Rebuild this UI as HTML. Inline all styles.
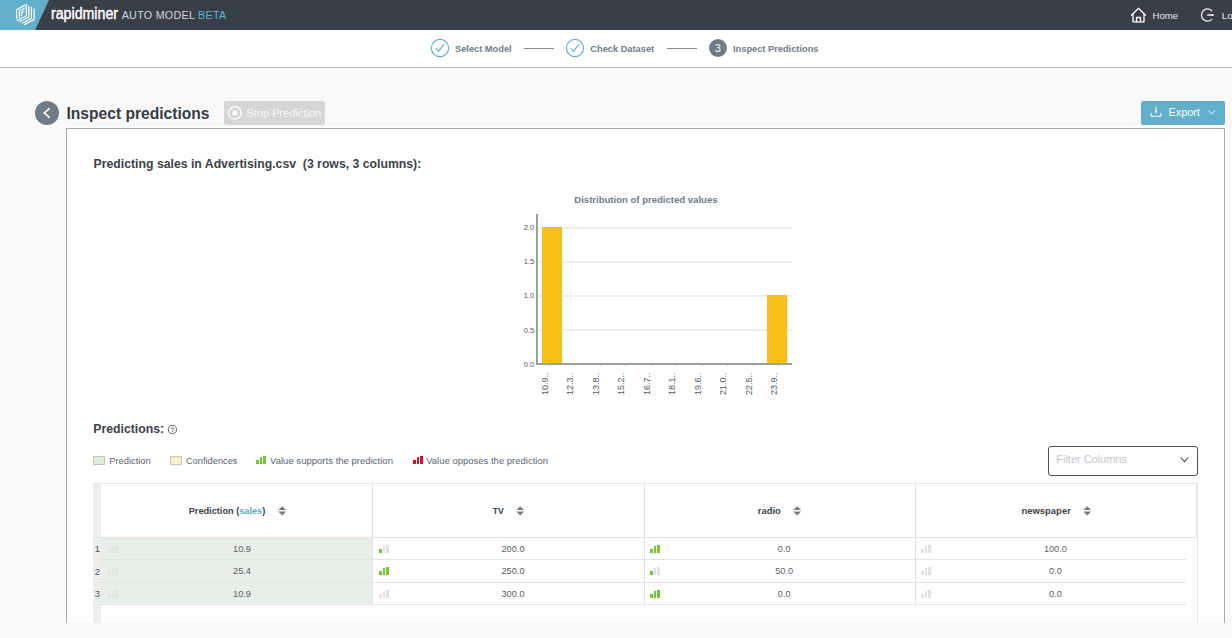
<!DOCTYPE html>
<html><head><meta charset="utf-8"><title>Inspect predictions</title>
<style>
html,body{margin:0;padding:0;width:1232px;height:638px;overflow:hidden;background:#f9f9f9;font-family:"Liberation Sans",sans-serif;}
.t{position:absolute;white-space:pre;}
.r{position:absolute;box-sizing:content-box;}
</style></head><body>
<div class="r" style="left:0px;top:0px;width:1232px;height:30px;background:#393f47;"></div>
<svg class="r" style="left:0;top:0" width="60" height="30"><polygon points="0,0 49,0 35.2,30 0,30" fill="#62afcb"/></svg>
<svg class="r" style="left:0;top:0" width="40" height="30"><g fill="none" stroke="#fff" stroke-width="1.25" stroke-linecap="round" stroke-linejoin="round">
<polyline points="25,5.1 16.6,9.9 16.6,18.5"/>
<polyline points="24.3,8.3 19.4,11.2 19.4,17.5"/>
<polyline points="24,11.2 21.7,12.6 21.7,15.5"/>
<polyline points="26.4,4.5 26.4,15.8 17.2,20.5"/>
<polyline points="28.8,6.1 28.8,17.1 19.5,21.8"/>
<polyline points="31.4,7.4 31.4,18.5 22.2,23.2"/>
<polyline points="34.1,9 34.1,19.6 24.7,24.4"/>
</g></svg>
<div class="t" style="left:50.80px;top:5.03px;font-size:16.5px;line-height:16.5px;font-weight:400;color:#fff;transform:scale(0.86,0.97);transform-origin:0 14px;-webkit-text-stroke:0.45px #fff">rapidminer</div>
<div class="t" style="left:121.70px;top:9.64px;font-size:10.7px;line-height:10.7px;font-weight:400;color:#d5d8db;letter-spacing:0.3px">AUTO MODEL <span style="color:#5cb4d6">BETA</span></div>
<svg class="r" style="left:1128px;top:5px" width="22" height="20"><g fill="none" stroke="#fff" stroke-width="1.3" stroke-linejoin="round" stroke-linecap="round">
<polyline points="3.5,10.3 10.5,3.2 17.5,10.3"/>
<polyline points="5,9 5,16.8 16,16.8 16,9"/>
<polyline points="8.5,16.8 8.5,12.5 12.5,12.5 12.5,16.8"/>
</g></svg>
<div class="t" style="left:1152.50px;top:11.07px;font-size:9.6px;line-height:9.6px;font-weight:400;color:#e9ecef;">Home</div>
<svg class="r" style="left:1198px;top:5px" width="20" height="20"><g fill="none" stroke="#eee" stroke-width="1.3" stroke-linecap="round">
<path d="M13.8,5.6 A6.1,6.1 0 1 0 13.8,14.4"/>
<line x1="9.8" y1="10" x2="14.5" y2="10" stroke-width="1.6"/>
</g><circle cx="14.6" cy="10" r="1.1" fill="#fff"/></svg>
<div class="t" style="left:1221.80px;top:10.60px;font-size:9.8px;line-height:9.8px;font-weight:400;color:#e9ecef;">Logout</div>
<div class="r" style="left:0px;top:30px;width:1232px;height:37px;background:#ffffff;"></div>
<div class="r" style="left:0px;top:67px;width:1232px;height:1px;background:#b1bac3;"></div>
<svg class="r" style="left:430px;top:38px" width="20" height="20"><circle cx="10" cy="10" r="8.6" fill="none" stroke="#5fb0cc" stroke-width="1.1"/><polyline points="5.8,10.4 8.4,13.4 13.8,6.4" fill="none" stroke="#5fb0cc" stroke-width="1.1"/></svg>
<div class="t" style="left:455.00px;top:45.15px;font-size:9.27px;line-height:9.27px;font-weight:700;color:#707d8a;">Select Model</div>
<div class="r" style="left:524px;top:48px;width:30px;height:1px;background:#7f8a94;"></div>
<svg class="r" style="left:565px;top:38px" width="20" height="20"><circle cx="10" cy="10" r="8.6" fill="none" stroke="#5fb0cc" stroke-width="1.1"/><polyline points="5.8,10.4 8.4,13.4 13.8,6.4" fill="none" stroke="#5fb0cc" stroke-width="1.1"/></svg>
<div class="t" style="left:590.30px;top:45.15px;font-size:9.27px;line-height:9.27px;font-weight:700;color:#707d8a;">Check Dataset</div>
<div class="r" style="left:667px;top:48px;width:30px;height:1px;background:#7f8a94;"></div>
<div class="r" style="left:709px;top:39px;width:18px;height:18px;border-radius:50%;background:#6f7c88"></div>
<div class="t" style="left:708.00px;top:43.31px;width:20px;text-align:center;font-size:10.5px;line-height:10.5px;font-weight:400;color:#fff;">3</div>
<div class="t" style="left:733.00px;top:45.15px;font-size:9.27px;line-height:9.27px;font-weight:700;color:#707d8a;">Inspect Predictions</div>
<div class="r" style="left:35px;top:101px;width:24px;height:24px;border-radius:50%;background:#6f7c88"></div>
<svg class="r" style="left:35px;top:101px" width="24" height="24"><polyline points="14.6,7.3 9.3,12 14.6,16.7" fill="none" stroke="#fff" stroke-width="1.6" stroke-linejoin="miter"/></svg>
<div class="t" style="left:66.50px;top:105.79px;font-size:15.6px;line-height:15.6px;font-weight:700;color:#363d45;">Inspect predictions</div>
<div class="r" style="left:224px;top:101px;width:101px;height:24px;border-radius:2px;background:#d6d6d6"></div>
<svg class="r" style="left:224px;top:101px" width="30" height="24"><circle cx="10.9" cy="11.9" r="6.3" fill="none" stroke="#ffffff" stroke-width="1.3"/><rect x="8.7" y="9.7" width="4.5" height="4.4" fill="#ffffff"/></svg>
<div class="t" style="left:246.60px;top:107.99px;font-size:11.0px;line-height:11.0px;font-weight:400;color:#f8f8f8;">Stop Prediction</div>
<div class="r" style="left:1141px;top:101px;width:84px;height:24px;border-radius:2px;background:#62afcb"></div>
<svg class="r" style="left:1141px;top:101px" width="84" height="24"><g fill="none" stroke="#fff" stroke-width="1.1">
<line x1="15" y1="5.8" x2="15" y2="11"/><polygon points="13.5,10.3 16.5,10.3 15,12.6" fill="#fff" stroke="none"/>
<polyline points="10.3,12.2 10.3,15.3 19.7,15.3 19.7,12.2"/>
<polyline points="67.3,9.4 70.6,13.1 73.9,9.4" stroke-width="0.9"/>
</g></svg>
<div class="t" style="left:1168.50px;top:107.02px;font-size:10.85px;line-height:10.85px;font-weight:400;color:#fff;">Export</div>
<div class="r" style="left:65px;top:127px;width:1161px;height:520px;background:#fff"></div>
<div class="r" style="left:66px;top:128px;width:1157px;height:520px;border:1px solid #9eaab4;background:#fff"></div>
<div class="t" style="left:93.60px;top:158.43px;font-size:12.25px;line-height:12.25px;font-weight:700;color:#3b424a;">Predicting sales in Advertising.csv&nbsp; (3 rows, 3 columns):</div>
<div class="t" style="left:574.30px;top:194.72px;font-size:9.55px;line-height:9.55px;font-weight:700;color:#6d7b8a;">Distribution of predicted values</div>
<div class="r" style="left:538px;top:227px;width:254px;height:2px;background:#eeeeee;"></div>
<div class="r" style="left:538px;top:261px;width:254px;height:2px;background:#eeeeee;"></div>
<div class="r" style="left:538px;top:295px;width:254px;height:2px;background:#eeeeee;"></div>
<div class="r" style="left:538px;top:329px;width:254px;height:2px;background:#eeeeee;"></div>
<div class="t" style="left:504.30px;top:224.17px;width:30px;text-align:right;font-size:7.6px;line-height:7.6px;font-weight:400;color:#4f5a66;">2.0</div>
<div class="t" style="left:504.30px;top:258.29px;width:30px;text-align:right;font-size:7.6px;line-height:7.6px;font-weight:400;color:#4f5a66;">1.5</div>
<div class="t" style="left:504.30px;top:292.42px;width:30px;text-align:right;font-size:7.6px;line-height:7.6px;font-weight:400;color:#4f5a66;">1.0</div>
<div class="t" style="left:504.30px;top:326.54px;width:30px;text-align:right;font-size:7.6px;line-height:7.6px;font-weight:400;color:#4f5a66;">0.5</div>
<div class="t" style="left:504.30px;top:360.67px;width:30px;text-align:right;font-size:7.6px;line-height:7.6px;font-weight:400;color:#4f5a66;">0.0</div>
<div class="r" style="left:542px;top:227px;width:20px;height:137px;background:#f9bf16;"></div>
<div class="r" style="left:767px;top:295px;width:20px;height:69px;background:#f9bf16;"></div>
<div class="r" style="left:536px;top:214px;width:2px;height:151px;background:#9a9fa4;"></div>
<div class="r" style="left:536px;top:363px;width:256px;height:2px;background:#9a9fa4;"></div>
<div class="r" style="left:549px;top:365px;width:1px;height:1px;background:#c4c7ca;"></div>
<div class="t" style="left:484.60px;top:367.50px;width:60px;height:9px;font-size:9px;line-height:9px;color:#4f5a66;text-align:right;transform-origin:60px 4.5px;transform:rotate(-90deg) translate(0px,0px)">10.9..</div>
<div class="r" style="left:574px;top:365px;width:1px;height:1px;background:#c4c7ca;"></div>
<div class="t" style="left:510.10px;top:367.50px;width:60px;height:9px;font-size:9px;line-height:9px;color:#4f5a66;text-align:right;transform-origin:60px 4.5px;transform:rotate(-90deg) translate(0px,0px)">12.3..</div>
<div class="r" style="left:600px;top:365px;width:1px;height:1px;background:#c4c7ca;"></div>
<div class="t" style="left:535.60px;top:367.50px;width:60px;height:9px;font-size:9px;line-height:9px;color:#4f5a66;text-align:right;transform-origin:60px 4.5px;transform:rotate(-90deg) translate(0px,0px)">13.8..</div>
<div class="r" style="left:625px;top:365px;width:1px;height:1px;background:#c4c7ca;"></div>
<div class="t" style="left:561.10px;top:367.50px;width:60px;height:9px;font-size:9px;line-height:9px;color:#4f5a66;text-align:right;transform-origin:60px 4.5px;transform:rotate(-90deg) translate(0px,0px)">15.2..</div>
<div class="r" style="left:651px;top:365px;width:1px;height:1px;background:#c4c7ca;"></div>
<div class="t" style="left:586.60px;top:367.50px;width:60px;height:9px;font-size:9px;line-height:9px;color:#4f5a66;text-align:right;transform-origin:60px 4.5px;transform:rotate(-90deg) translate(0px,0px)">16.7..</div>
<div class="r" style="left:676px;top:365px;width:1px;height:1px;background:#c4c7ca;"></div>
<div class="t" style="left:612.10px;top:367.50px;width:60px;height:9px;font-size:9px;line-height:9px;color:#4f5a66;text-align:right;transform-origin:60px 4.5px;transform:rotate(-90deg) translate(0px,0px)">18.1..</div>
<div class="r" style="left:702px;top:365px;width:1px;height:1px;background:#c4c7ca;"></div>
<div class="t" style="left:637.60px;top:367.50px;width:60px;height:9px;font-size:9px;line-height:9px;color:#4f5a66;text-align:right;transform-origin:60px 4.5px;transform:rotate(-90deg) translate(0px,0px)">19.6..</div>
<div class="r" style="left:727px;top:365px;width:1px;height:1px;background:#c4c7ca;"></div>
<div class="t" style="left:663.10px;top:367.50px;width:60px;height:9px;font-size:9px;line-height:9px;color:#4f5a66;text-align:right;transform-origin:60px 4.5px;transform:rotate(-90deg) translate(0px,0px)">21.0..</div>
<div class="r" style="left:753px;top:365px;width:1px;height:1px;background:#c4c7ca;"></div>
<div class="t" style="left:688.60px;top:367.50px;width:60px;height:9px;font-size:9px;line-height:9px;color:#4f5a66;text-align:right;transform-origin:60px 4.5px;transform:rotate(-90deg) translate(0px,0px)">22.5..</div>
<div class="r" style="left:778px;top:365px;width:1px;height:1px;background:#c4c7ca;"></div>
<div class="t" style="left:714.10px;top:367.50px;width:60px;height:9px;font-size:9px;line-height:9px;color:#4f5a66;text-align:right;transform-origin:60px 4.5px;transform:rotate(-90deg) translate(0px,0px)">23.9..</div>
<div class="t" style="left:93.30px;top:422.53px;font-size:12.25px;line-height:12.25px;font-weight:700;color:#3b424a;">Predictions:</div>
<svg class="r" style="left:167px;top:424px" width="11" height="11"><circle cx="5.4" cy="5.45" r="4.05" fill="none" stroke="#5a5f64" stroke-width="0.95"/><path d="M4.15,4.7 C4.15,3.5 6.75,3.5 6.75,4.7 C6.75,5.6 5.45,5.6 5.45,6.5 L5.45,6.7" fill="none" stroke="#5a5f64" stroke-width="0.95"/><rect x="4.95" y="7.1" width="1" height="0.9" fill="#5a5f64"/></svg>
<div class="r" style="left:93px;top:456px;width:10px;height:7px;border:1px solid #c9c4ad;background:#dcebdf"></div>
<div class="t" style="left:109.20px;top:456.59px;font-size:9.35px;line-height:9.35px;font-weight:400;color:#5b6570;">Prediction</div>
<div class="r" style="left:170px;top:456px;width:10px;height:7px;border:1px solid #c9c4ad;background:#f8f3cc"></div>
<div class="t" style="left:186.00px;top:456.67px;font-size:9.25px;line-height:9.25px;font-weight:400;color:#5b6570;">Confidences</div>
<div class="r" style="left:256px;top:460px;width:3px;height:4px;background:#74c92a;"></div>
<div class="r" style="left:260px;top:457px;width:2px;height:7px;background:#74c92a;"></div>
<div class="r" style="left:263px;top:456px;width:3px;height:8px;background:#74c92a;"></div>
<div class="t" style="left:270.00px;top:455.52px;font-size:9.55px;line-height:9.55px;font-weight:400;color:#5b6570;">Value supports the prediction</div>
<div class="r" style="left:413px;top:460px;width:3px;height:4px;background:#d0112b;"></div>
<div class="r" style="left:417px;top:457px;width:2px;height:7px;background:#d0112b;"></div>
<div class="r" style="left:420px;top:456px;width:3px;height:8px;background:#d0112b;"></div>
<div class="t" style="left:426.20px;top:455.56px;font-size:9.5px;line-height:9.5px;font-weight:400;color:#5b6570;">Value opposes the prediction</div>
<div class="r" style="left:1048px;top:446px;width:148px;height:28px;border:1px solid #4a5057;border-radius:3px;background:#fff"></div>
<div class="t" style="left:1056.30px;top:454.23px;font-size:10.95px;line-height:10.95px;font-weight:400;color:#c3c7cc;">Filter Columns</div>
<svg class="r" style="left:1178px;top:454px" width="12" height="12"><polyline points="2.8,3.5 6.5,7.6 10.2,3.5" fill="none" stroke="#444" stroke-width="1.1"/></svg>
<div class="r" style="left:93px;top:483px;width:1105px;height:1px;background:#e4e4e4;"></div>
<div class="r" style="left:93px;top:484px;width:8px;height:200px;background:#eeeeee;"></div>
<div class="r" style="left:93px;top:537px;width:1104px;height:1px;background:#e4e4e4;"></div>
<div class="r" style="left:101px;top:538px;width:271px;height:66px;background:#e6efe8;"></div>
<div class="r" style="left:372px;top:484px;width:1px;height:121px;background:#e4e4e4;"></div>
<div class="r" style="left:644px;top:484px;width:1px;height:121px;background:#e4e4e4;"></div>
<div class="r" style="left:915px;top:484px;width:1px;height:121px;background:#e4e4e4;"></div>
<div class="r" style="left:1196px;top:484px;width:1px;height:54px;background:#e4e4e4;"></div>
<div class="r" style="left:1197px;top:483px;width:1px;height:140px;background:#e6e6e6;"></div>
<div class="r" style="left:93px;top:559px;width:1093px;height:1px;background:#e4e4e4;"></div>
<div class="r" style="left:93px;top:582px;width:1093px;height:1px;background:#e4e4e4;"></div>
<div class="r" style="left:93px;top:604px;width:1093px;height:1px;background:#e4e4e4;"></div>
<div class="t" style="left:188.70px;top:507.21px;font-size:9.2px;line-height:9.2px;font-weight:700;color:#3b424a;">Prediction (<span style="color:#5aaecb">sales</span>)</div>
<svg class="r" style="left:278px;top:505.5px" width="9" height="10"><polygon points="0.3,4.1 4.2,0.2 8.1,4.1" fill="#7a7a7a"/><polygon points="0.3,5.6 4.2,9.5 8.1,5.6" fill="#7a7a7a"/></svg>
<div class="t" style="left:492.80px;top:506.64px;font-size:8.7px;line-height:8.7px;font-weight:700;color:#3b424a;">TV</div>
<svg class="r" style="left:516px;top:505.5px" width="9" height="10"><polygon points="0.3,4.1 4.2,0.2 8.1,4.1" fill="#7a7a7a"/><polygon points="0.3,5.6 4.2,9.5 8.1,5.6" fill="#7a7a7a"/></svg>
<div class="t" style="left:757.80px;top:506.04px;font-size:9.4px;line-height:9.4px;font-weight:700;color:#3b424a;">radio</div>
<svg class="r" style="left:793px;top:505.5px" width="9" height="10"><polygon points="0.3,4.1 4.2,0.2 8.1,4.1" fill="#7a7a7a"/><polygon points="0.3,5.6 4.2,9.5 8.1,5.6" fill="#7a7a7a"/></svg>
<div class="t" style="left:1021.50px;top:506.00px;font-size:9.45px;line-height:9.45px;font-weight:700;color:#3b424a;">newspaper</div>
<svg class="r" style="left:1083px;top:505.5px" width="9" height="10"><polygon points="0.3,4.1 4.2,0.2 8.1,4.1" fill="#7a7a7a"/><polygon points="0.3,5.6 4.2,9.5 8.1,5.6" fill="#7a7a7a"/></svg>
<div class="t" style="left:92.40px;top:544.36px;width:10px;text-align:center;font-size:9.5px;line-height:9.5px;font-weight:400;color:#555;">1</div>
<div class="r" style="left:108px;top:549px;width:3px;height:4px;background:#dfe6e0;"></div>
<div class="r" style="left:112px;top:546px;width:2px;height:7px;background:#dfe6e0;"></div>
<div class="r" style="left:115px;top:545px;width:3px;height:8px;background:#dfe6e0;"></div>
<div class="t" style="left:202.00px;top:544.61px;width:80px;text-align:center;font-size:9.2px;line-height:9.2px;font-weight:400;color:#5a6066;">10.9</div>
<div class="r" style="left:379px;top:549px;width:3px;height:4px;background:#74c92a;"></div>
<div class="r" style="left:383px;top:546px;width:2px;height:7px;background:#e2e2e2;"></div>
<div class="r" style="left:386px;top:545px;width:3px;height:8px;background:#e2e2e2;"></div>
<div class="t" style="left:473.00px;top:544.61px;width:80px;text-align:center;font-size:9.2px;line-height:9.2px;font-weight:400;color:#5a6066;">200.0</div>
<div class="r" style="left:650px;top:549px;width:3px;height:4px;background:#74c92a;"></div>
<div class="r" style="left:654px;top:546px;width:2px;height:7px;background:#74c92a;"></div>
<div class="r" style="left:657px;top:545px;width:3px;height:8px;background:#74c92a;"></div>
<div class="t" style="left:744.20px;top:544.61px;width:80px;text-align:center;font-size:9.2px;line-height:9.2px;font-weight:400;color:#5a6066;">0.0</div>
<div class="r" style="left:921px;top:549px;width:3px;height:4px;background:#e2e2e2;"></div>
<div class="r" style="left:925px;top:546px;width:2px;height:7px;background:#e2e2e2;"></div>
<div class="r" style="left:928px;top:545px;width:3px;height:8px;background:#e2e2e2;"></div>
<div class="t" style="left:1015.40px;top:544.61px;width:80px;text-align:center;font-size:9.2px;line-height:9.2px;font-weight:400;color:#5a6066;">100.0</div>
<div class="t" style="left:92.40px;top:566.66px;width:10px;text-align:center;font-size:9.5px;line-height:9.5px;font-weight:400;color:#555;">2</div>
<div class="r" style="left:108px;top:571px;width:3px;height:4px;background:#dfe6e0;"></div>
<div class="r" style="left:112px;top:568px;width:2px;height:7px;background:#dfe6e0;"></div>
<div class="r" style="left:115px;top:567px;width:3px;height:8px;background:#dfe6e0;"></div>
<div class="t" style="left:202.00px;top:566.91px;width:80px;text-align:center;font-size:9.2px;line-height:9.2px;font-weight:400;color:#5a6066;">25.4</div>
<div class="r" style="left:379px;top:571px;width:3px;height:4px;background:#74c92a;"></div>
<div class="r" style="left:383px;top:568px;width:2px;height:7px;background:#74c92a;"></div>
<div class="r" style="left:386px;top:567px;width:3px;height:8px;background:#74c92a;"></div>
<div class="t" style="left:473.00px;top:566.91px;width:80px;text-align:center;font-size:9.2px;line-height:9.2px;font-weight:400;color:#5a6066;">250.0</div>
<div class="r" style="left:650px;top:571px;width:3px;height:4px;background:#74c92a;"></div>
<div class="r" style="left:654px;top:568px;width:2px;height:7px;background:#e2e2e2;"></div>
<div class="r" style="left:657px;top:567px;width:3px;height:8px;background:#e2e2e2;"></div>
<div class="t" style="left:744.20px;top:566.91px;width:80px;text-align:center;font-size:9.2px;line-height:9.2px;font-weight:400;color:#5a6066;">50.0</div>
<div class="r" style="left:921px;top:571px;width:3px;height:4px;background:#e2e2e2;"></div>
<div class="r" style="left:925px;top:568px;width:2px;height:7px;background:#e2e2e2;"></div>
<div class="r" style="left:928px;top:567px;width:3px;height:8px;background:#e2e2e2;"></div>
<div class="t" style="left:1015.40px;top:566.91px;width:80px;text-align:center;font-size:9.2px;line-height:9.2px;font-weight:400;color:#5a6066;">0.0</div>
<div class="t" style="left:92.40px;top:589.36px;width:10px;text-align:center;font-size:9.5px;line-height:9.5px;font-weight:400;color:#555;">3</div>
<div class="r" style="left:108px;top:594px;width:3px;height:4px;background:#dfe6e0;"></div>
<div class="r" style="left:112px;top:591px;width:2px;height:7px;background:#dfe6e0;"></div>
<div class="r" style="left:115px;top:590px;width:3px;height:8px;background:#dfe6e0;"></div>
<div class="t" style="left:202.00px;top:589.61px;width:80px;text-align:center;font-size:9.2px;line-height:9.2px;font-weight:400;color:#5a6066;">10.9</div>
<div class="r" style="left:379px;top:594px;width:3px;height:4px;background:#e2e2e2;"></div>
<div class="r" style="left:383px;top:591px;width:2px;height:7px;background:#e2e2e2;"></div>
<div class="r" style="left:386px;top:590px;width:3px;height:8px;background:#e2e2e2;"></div>
<div class="t" style="left:473.00px;top:589.61px;width:80px;text-align:center;font-size:9.2px;line-height:9.2px;font-weight:400;color:#5a6066;">300.0</div>
<div class="r" style="left:650px;top:594px;width:3px;height:4px;background:#74c92a;"></div>
<div class="r" style="left:654px;top:591px;width:2px;height:7px;background:#74c92a;"></div>
<div class="r" style="left:657px;top:590px;width:3px;height:8px;background:#74c92a;"></div>
<div class="t" style="left:744.20px;top:589.61px;width:80px;text-align:center;font-size:9.2px;line-height:9.2px;font-weight:400;color:#5a6066;">0.0</div>
<div class="r" style="left:921px;top:594px;width:3px;height:4px;background:#e2e2e2;"></div>
<div class="r" style="left:925px;top:591px;width:2px;height:7px;background:#e2e2e2;"></div>
<div class="r" style="left:928px;top:590px;width:3px;height:8px;background:#e2e2e2;"></div>
<div class="t" style="left:1015.40px;top:589.61px;width:80px;text-align:center;font-size:9.2px;line-height:9.2px;font-weight:400;color:#5a6066;">0.0</div>
<div class="r" style="left:0px;top:623px;width:1232px;height:15px;background:#f9f9f9;"></div>
</body></html>
